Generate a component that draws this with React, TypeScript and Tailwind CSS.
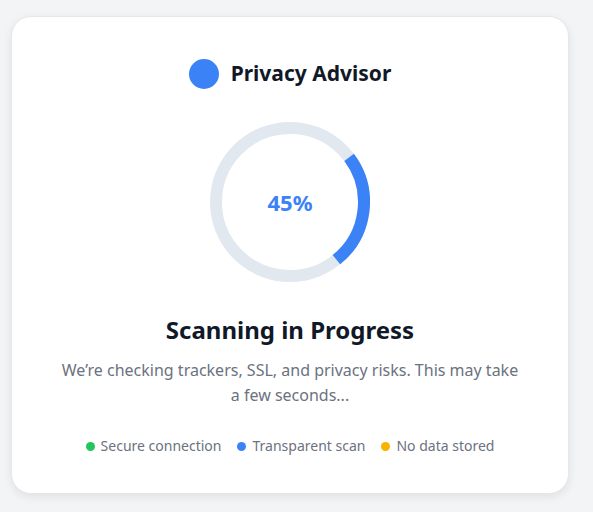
import React from "react";

const legend = [
  { label: "Secure connection", dot: "bg-[#22c55e]" },
  { label: "Transparent scan", dot: "bg-[#3b82f6]" },
  { label: "No data stored", dot: "bg-[#f5b400]" },
];

function ProgressRing() {
  // arc drawn from ~53deg to ~141deg (clockwise from top)
  const r = 74;
  const c = 2 * Math.PI * r;
  const start = 53;
  const sweep = 88;
  const len = (sweep / 360) * c;
  return (
    <div className="relative w-40 h-40">
      <svg width="160" height="160" viewBox="0 0 160 160" className="block">
        <circle cx="80" cy="80" r={r} fill="none" stroke="#e2e8f0" strokeWidth="12" />
        <circle
          cx="80"
          cy="80"
          r={r}
          fill="none"
          stroke="#3b82f6"
          strokeWidth="12"
          strokeDasharray={`${len} ${c}`}
          transform={`rotate(${start - 90} 80 80)`}
        />
      </svg>
      <div className="absolute inset-0 flex items-center justify-center">
        <span className="text-[22px] font-bold text-[#3b82f6]">45%</span>
      </div>
    </div>
  );
}

export default function App() {
  return (
    <div
      className="min-h-screen bg-[#f3f4f6] pl-[11px] pt-4"
      style={{ fontFamily: '"Noto Sans", "Open Sans", sans-serif' }}
    >
      <div className="w-[558px] h-[478px] bg-white rounded-[20px] border border-[#e5e7eb] shadow-[0_3px_10px_rgba(0,0,0,0.08)] px-10 pt-[41px] flex flex-col items-center">
        <div className="flex items-center gap-3 h-8">
          <div className="w-[30px] h-[30px] rounded-full bg-[#3b82f6]" />
          <span className="text-[21px] font-bold text-[#111827]">Privacy Advisor</span>
        </div>

        <div className="mt-8">
          <ProgressRing />
        </div>

        <h2 className="mt-8 text-2xl leading-8 font-bold text-[#111827]">Scanning in Progress</h2>
        <p className="mt-3 max-w-[466px] text-base leading-[25px] text-[#6b7280] text-center">
          We’re checking trackers, SSL, and privacy risks. This may take a few seconds...
        </p>

        <div className="mt-7 flex items-center gap-4">
          {legend.map((item) => (
            <div key={item.label} className="flex items-center gap-1.5 text-sm leading-5 text-[#6b7280]">
              <span className={`w-[9px] h-[9px] rounded-full ${item.dot}`} />
              {item.label}
            </div>
          ))}
        </div>
      </div>
    </div>
  );
}
